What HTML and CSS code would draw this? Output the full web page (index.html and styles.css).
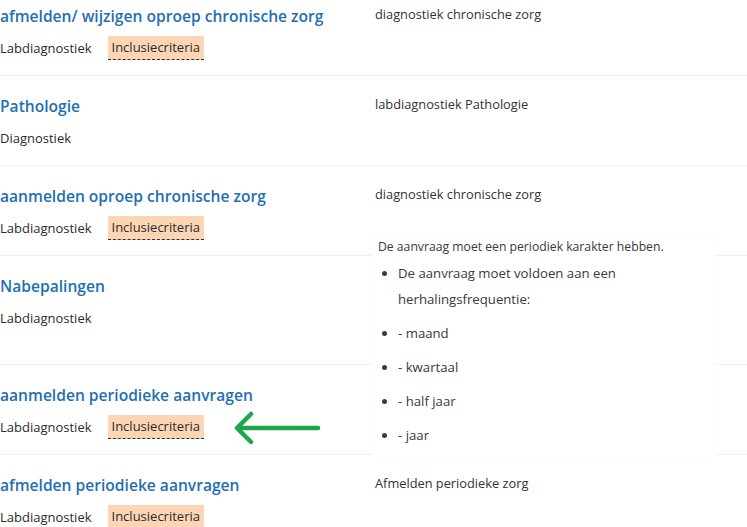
FILE: index.html
```html
<!DOCTYPE html>
<html lang="nl">
<head>
<meta charset="utf-8">
<title>Aanvragen</title>
<link rel="stylesheet" href="styles.css">
</head>
<body>
<div class="page">
  <div class="list">
    <div class="row">
      <div class="main">
        <a class="title" href="#">afmelden/ wijzigen oproep chronische zorg</a>
        <div class="meta"><span class="cat">Labdiagnostiek</span><span class="badge">Inclusiecriteria</span></div>
      </div>
      <div class="desc">diagnostiek chronische zorg</div>
    </div>
    <div class="row">
      <div class="main">
        <a class="title" href="#">Pathologie</a>
        <div class="meta"><span class="cat">Diagnostiek</span></div>
      </div>
      <div class="desc">labdiagnostiek Pathologie</div>
    </div>
    <div class="row">
      <div class="main">
        <a class="title" href="#">aanmelden oproep chronische zorg</a>
        <div class="meta"><span class="cat">Labdiagnostiek</span><span class="badge">Inclusiecriteria</span></div>
      </div>
      <div class="desc">diagnostiek chronische zorg</div>
    </div>
    <div class="row row-tall">
      <div class="main">
        <a class="title" href="#">Nabepalingen</a>
        <div class="meta"><span class="cat">Labdiagnostiek</span></div>
      </div>
      <div class="desc"></div>
    </div>
    <div class="row">
      <div class="main">
        <a class="title" href="#">aanmelden periodieke aanvragen</a>
        <div class="meta"><span class="cat">Labdiagnostiek</span><span class="badge">Inclusiecriteria</span></div>
      </div>
      <div class="desc"></div>
    </div>
    <div class="row">
      <div class="main">
        <a class="title" href="#">afmelden periodieke aanvragen</a>
        <div class="meta"><span class="cat">Labdiagnostiek</span><span class="badge">Inclusiecriteria</span></div>
      </div>
      <div class="desc">Afmelden periodieke zorg</div>
    </div>
  </div>

  <div class="tooltip">
    <p class="tip-lead">De aanvraag moet een periodiek karakter hebben.</p>
    <ul class="tip-list">
      <li>De aanvraag moet voldoen aan een herhalingsfrequentie:</li>
      <li>- maand</li>
      <li>- kwartaal</li>
      <li>- half jaar</li>
      <li>- jaar</li>
    </ul>
  </div>

  <svg class="arrow" width="92" height="38" viewBox="0 0 92 38" aria-hidden="true">
    <path d="M86 19 H6 M19 5 L5 19 L19 33" fill="none" stroke="#1ea64b" stroke-width="4.5" stroke-linecap="round" stroke-linejoin="round"/>
  </svg>
</div>
</body>
</html>
```

FILE: styles.css
```css
* { box-sizing: border-box; }

html, body {
  margin: 0;
  padding: 0;
  background: #ffffff;
}

body {
  font-family: "Open Sans", "Noto Sans", sans-serif;
  color: #333333;
  overflow: hidden;
}

.page {
  position: relative;
  width: 747px;
  height: 527px;
  overflow: hidden;
}

.list {
  margin-top: -14px;
}

.row {
  display: grid;
  grid-template-columns: 375px 1fr;
  border-bottom: 1px solid #efefef;
}

.row-tall .main {
  padding-bottom: 34px;
}

.main {
  padding: 18px 0 15px 0;
}

.title {
  display: block;
  font-size: 15.6px;
  font-weight: 600;
  line-height: 24px;
  color: #1f6fb2;
  text-decoration: none;
}

.meta {
  display: flex;
  align-items: center;
  gap: 16px;
  height: 24px;
  margin-top: 8px;
  font-size: 13px;
  color: #2b2b2b;
}

.badge {
  display: inline-block;
  background: #fcd5b5;
  padding: 0 4px;
  line-height: 23px;
  border-bottom: 1px dashed #333333;
}

.desc {
  padding-top: 18px;
  font-size: 12.8px;
  line-height: 20px;
  color: #333333;
}

.tooltip {
  position: absolute;
  left: 372px;
  top: 233px;
  width: 343px;
  padding: 0 8px 10px 6px;
  background: #ffffff;
  box-shadow: 0 0 2px rgba(0, 0, 0, 0.03);
  font-size: 12.2px;
  color: #3a3a3a;
}

.tip-lead {
  margin: 0;
  line-height: 27px;
}

.tip-list {
  margin: 0;
  padding-left: 20px;
  font-size: 13.2px;
}

.tip-list li {
  line-height: 26px;
  margin-bottom: 8px;
  padding-right: 40px;
}

.tip-list li:last-child {
  margin-bottom: 0;
}

.arrow {
  position: absolute;
  left: 232px;
  top: 409px;
}
```
